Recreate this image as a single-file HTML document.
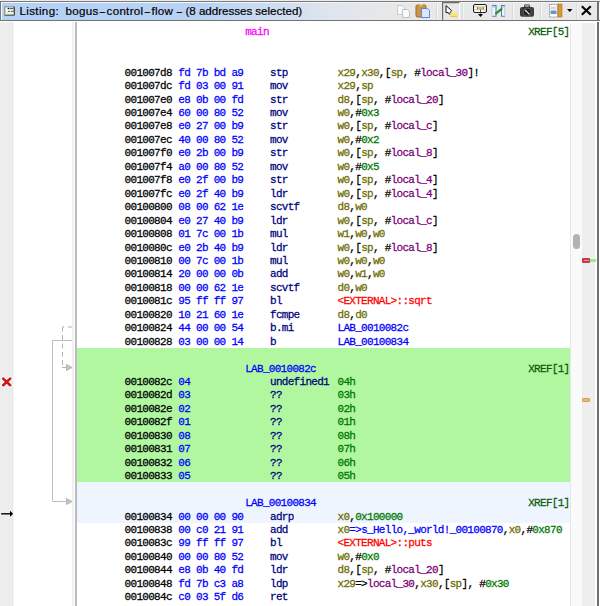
<!DOCTYPE html>
<html><head><meta charset="utf-8">
<style>
html,body{margin:0;padding:0;}
body{width:600px;height:606px;overflow:hidden;position:relative;background:#fff;}
.abs{position:absolute;}
.t{position:absolute;white-space:pre;font-family:"Liberation Mono",monospace;font-size:11px;letter-spacing:-0.7px;line-height:normal;-webkit-text-stroke:0.25px currentColor;transform:scaleY(1.07);transform-origin:0 9.2px;}
.dsh{display:inline-block;margin:0 0.6px;transform:scaleX(0.8)}
.tt{position:absolute;top:2.5px;font-family:'Liberation Sans';font-size:11.6px;line-height:16px;white-space:pre;color:#000;-webkit-text-stroke:0.2px #000}
#title{position:absolute;left:0;top:0;width:600px;height:22px;}
</style></head><body>
<!-- left gutter -->
<div class="abs" style="left:0;top:22px;width:12px;height:584px;background:#ededed"></div>
<div class="abs" style="left:12px;top:22px;width:1px;height:584px;background:#e7e7e7"></div>
<div class="abs" style="left:13px;top:22px;width:1px;height:584px;background:#f7f7f7"></div>
<!-- faint line and main bar -->
<div class="abs" style="left:72px;top:22px;width:2px;height:584px;background:#f0f0f0"></div>
<div class="abs" style="left:75px;top:22px;width:2px;height:584px;background:#bababa"></div>
<div class="abs" style="left:76px;top:348px;width:1px;height:134px;background:#c6b6d0"></div>
<!-- selection green -->
<div class="abs" style="left:77px;top:347.7px;width:493px;height:134.3px;background:#b0f7a0"></div>
<!-- cursor highlight -->
<div class="abs" style="left:77px;top:482px;width:493px;height:41px;background:#eef5fe"></div>
<!-- scrollbar -->
<div class="abs" style="left:570px;top:23px;width:12px;height:583px;background:#fafafa;border-left:1px solid #e6e6e6;box-sizing:border-box"></div>
<div class="abs" style="left:582px;top:23px;width:12.5px;height:583px;background:#eeeeee"></div>
<div class="abs" style="left:594.5px;top:23px;width:2.5px;height:583px;background:#fdfdfd"></div>
<div class="abs" style="left:597px;top:0;width:2px;height:606px;background:#6e6e6e"></div>
<div class="abs" style="left:573px;top:234px;width:7px;height:15px;background:#b2b2b2;border-radius:4px"></div>
<div class="abs" style="left:582px;top:258px;width:8px;height:5px;background:#c83848;border-radius:1px"></div>
<div class="abs" style="left:583.5px;top:260px;width:5px;height:1px;background:#e8a0a8"></div>
<div class="abs" style="left:590px;top:259px;width:6px;height:3px;background:#9be88f"></div>
<div class="abs" style="left:582px;top:398px;width:8px;height:4px;background:#c4c0b4;border:1px solid #e89a30;box-sizing:border-box;border-radius:1px"></div>
<!-- flow arrows -->
<svg class="abs" style="left:0;top:0" width="600" height="606" viewBox="0 0 600 606">
 <g fill="none" stroke="#b4b4b4" stroke-width="1">
  <path d="M72 340.5 H52.5 V501.5 H67" stroke="#bdbdbd"/>
  <path d="M68 327 H72 M62.5 327 H64.2 M62.5 326.5 V331.7 M62.5 335 V340.5 M62.5 343.5 V348.5 M62.5 352 V356.7 M62.5 360 V365 M62 367.5 H67"/>
 </g>
 <path d="M66.5 364.5 L72 367.5 L66.5 370.5 Z" fill="#c6c6c6" stroke="#a8a8a8" stroke-width="0.8" stroke-linejoin="round"/>
 <path d="M66.5 498.5 L72 501.5 L66.5 504.5 Z" fill="#c6c6c6" stroke="#a8a8a8" stroke-width="0.8" stroke-linejoin="round"/>
 <!-- red X -->
 <g stroke-linecap="round">
  <path d="M3.2 378.6 L10.2 385.2 M10.2 378.6 L3.2 385.2" stroke="#ffffff" stroke-width="4.6" opacity="0.7"/>
  <path d="M3.2 378.6 L10.2 385.2 M10.2 378.6 L3.2 385.2" stroke="#c81818" stroke-width="2.6"/>
 </g>
 <!-- black arrow -->
 <path d="M1.2 513.8 H10.5" stroke="#111" stroke-width="1.5"/>
 <path d="M10 510.8 L13.2 513.8 L10 516.8 Z" fill="#000"/>
</svg>
<!-- title bar -->
<div id="title">
 <div class="abs" style="left:0;top:0;width:600px;height:1px;background:#ececec"></div>
 <div class="abs" style="left:0;top:1px;width:600px;height:1px;background:#7a7a7a"></div>
 <div class="abs" style="left:0;top:3px;width:597px;height:17px;background:linear-gradient(to right,#b5d1f6 0px,#b9d2f3 200px,#dfe5ee 330px,#e8e8e8 400px,#e8e8e8 600px)"></div>
 <div class="abs" style="left:0;top:20px;width:600px;height:1px;background:#737373"></div>
 <div class="abs" style="left:0;top:21px;width:600px;height:1px;background:#fdfdfd"></div>
 <div class="abs" style="left:1px;top:2px;width:1px;height:18px;background:#f4f8ff"></div>
 <div class="abs" style="left:1px;top:2px;width:596px;height:1px;background:#f2f6fc"></div>
 <div class="abs" style="left:0;top:1px;width:1px;height:20px;background:#7a7a7a"></div>
 <div class="tt" style="left:19.5px;letter-spacing:0.35px">Listing:</div>
 <div class="tt" style="left:65.5px;letter-spacing:0.3px">bogus<span class="dsh">–</span>control<span class="dsh">–</span>flow</div>
 <div class="tt" style="left:175.2px"><span class="dsh">–</span></div>
 <div class="tt" style="left:185.5px;letter-spacing:-0.03px">(8 addresses selected)</div>

 <!-- toolbar -->
 <svg class="abs" style="left:0;top:0" width="600" height="22" viewBox="0 0 600 22">
  <!-- title icon -->
  <rect x="4" y="6.5" width="11" height="9.2" rx="1" fill="#4e4a3c"/>
  <rect x="4.2" y="7" width="2" height="8.2" fill="#b8a888"/>
  <rect x="5.5" y="7.3" width="8" height="7.5" fill="#fbfbf8"/>
  <path d="M6 7 H13" stroke="#c8dcc4" stroke-width="0.8"/>
  <circle cx="8.3" cy="8.6" r="0.75" fill="#000"/>
  <path d="M9.4 8.6 H13.3" stroke="#243488" stroke-width="0.9"/>
  <path d="M7.8 11.3 H10.1 M11 11.3 H13.2" stroke="#2e4a5a" stroke-width="1"/>
  <rect x="6" y="12.6" width="7.4" height="1.9" fill="#dcf2dc"/>
  <path d="M5.5 15 H13.5" stroke="#6a7a58" stroke-width="0.9"/>
  <!-- separators faint -->
  <path d="M436.5 3 V19 M462.5 3 V19 M512.5 3 V19 M540.5 3 V19 M576.5 3 V19" stroke="#dadada" stroke-width="1"/>
  <path d="M437.5 3 V19 M463.5 3 V19 M513.5 3 V19 M541.5 3 V19 M577.5 3 V19" stroke="#f6f6f6" stroke-width="1"/>
  <!-- copy disabled -->
  <path d="M397.5 5.5 H402.5 L404.5 7.5 V14.5 H397.5 Z" fill="#fafafa" stroke="#c8c8c8"/>
  <path d="M402.5 9.5 H407.5 L409.5 11.5 V17.5 H402.5 Z" fill="#fafafa" stroke="#c0c0c0"/>
  <!-- paste -->
  <rect x="416" y="5" width="10" height="12" rx="1.5" fill="#c8954a" stroke="#9a6a2a" stroke-width="1"/>
  <rect x="419" y="4" width="4" height="2" fill="#e8c070"/>
  <path d="M421.5 8.5 H427.5 L429.5 10.5 V17.5 H421.5 Z" fill="#dce8fa" stroke="#5a88d8"/>
  <!-- pressed button -->
  <path d="M442.6 20 V2.6 H459.5" stroke="#6e6e6e" stroke-width="1.2" fill="none"/><path d="M459.5 3.2 V19.5" stroke="#fafafa" stroke-width="1"/>
  <path d="M446 5.6 L451.6 10.6 L450.3 12.2 L450.2 14 L449.3 14.2 L448.3 12.6 L446 12.6 Z" fill="#fff" stroke="#111" stroke-width="1" stroke-linejoin="round"/>
  <rect x="450.2" y="13" width="7" height="3.8" fill="#fbe46a"/><path d="M450.2 16.5 H457.2" stroke="#f0b840" stroke-width="0.8"/>
  <!-- table icon -->
  <rect x="473.5" y="4.5" width="13" height="8" rx="1.5" fill="#fff" stroke="#1a1a1a" stroke-width="1"/>
  <path d="M474 6.8 H486 M474 9.8 H486" stroke="#b8b8b8" stroke-width="0.9"/>
  <rect x="478" y="7.2" width="5" height="2.2" fill="#f2b532"/>
  <path d="M477.5 7.2 V9.4 M483.5 7.2 V9.4" stroke="#3a4a7a" stroke-width="0.7"/>
  <path d="M480.5 9.5 V13.5" stroke="#1a2a60" stroke-width="0.8"/>
  <path d="M478 14 H483 L480.5 17 Z" fill="#000"/>
  <!-- checkmark icon -->
  <rect x="491.8" y="5.5" width="4.4" height="11" fill="#f4f8fe"/>
  <rect x="501.2" y="5.5" width="3.6" height="11" fill="#f4f8fe"/>
  <path d="M492 5.6 H496 V16.3 H492" fill="none" stroke="#4f7fd0" stroke-width="1.1"/>
  <path d="M492 6 V16" stroke="#a8c0e8" stroke-width="0.8"/>
  <path d="M505 5.6 H501.5 V16.3 H505" fill="none" stroke="#4f7fd0" stroke-width="1.1"/>
  <path d="M504.8 6 V16" stroke="#a8c0e8" stroke-width="0.8"/>
  <path d="M492.5 7.2 H495.5 M502 7.2 H504.5" stroke="#a8d890" stroke-width="1"/>
  <path d="M496 13.3 L501.5 9.2" fill="none" stroke="#2e8e22" stroke-width="2.2" stroke-linecap="round"/>
  <!-- camera -->
  <rect x="520" y="7" width="14" height="9.8" rx="2" fill="#3c3c3c"/>
  <path d="M523.8 7.5 L524.6 4.6 H529.4 L530.2 7.5 Z" fill="#2c2c2c"/>
  <rect x="525.2" y="5.3" width="3.6" height="1.3" fill="#d8d8d8"/>
  <circle cx="527.3" cy="12.2" r="4" fill="#202020" stroke="#707070" stroke-width="0.7"/>
  <path d="M525 10 L529.5 14.4" stroke="#e8e8e8" stroke-width="1.2"/>
  <!-- page icon -->
  <rect x="549.5" y="4.5" width="8" height="12.5" fill="#fff" stroke="#707070" stroke-width="0.8" stroke-dasharray="1 0.6"/>
  <rect x="550.5" y="6.5" width="6" height="3" fill="#d8d8d8"/>
  <rect x="550.5" y="10.5" width="6" height="3.5" fill="#6a94c8"/>
  <rect x="558" y="4" width="4" height="13" fill="#d89a30" stroke="#b07020" stroke-width="0.6"/>
  <!-- dropdown -->
  <path d="M567 9 H572.5 L569.75 12 Z" fill="#000"/>
  <!-- close X -->
  <path d="M581.8 6.3 L590.8 14.8 M590.8 6.3 L581.8 14.8" stroke="#000" stroke-width="2.1"/>
 </svg>
</div>
<div class="t" style="top:26.34px;left:245.20px"><span style="color:#ff00ff">main</span></div>
<div class="t" style="top:26.34px;right:30.50px"><span style="color:#0c5c0c">XREF[5]</span></div>
<div class="t" style="top:66.69px;left:124.60px"><span style="color:#000">001007d8</span></div>
<div class="t" style="top:66.69px;left:178.30px"><span style="color:#0000ff">fd 7b bd a9</span></div>
<div class="t" style="top:66.69px;left:270.00px"><span style="color:#000080">stp</span></div>
<div class="t" style="top:66.69px;left:337.50px"><span style="color:#6c6c00">x29</span><span style="color:#000">,</span><span style="color:#6c6c00">x30</span><span style="color:#000">,</span><span style="color:#000">[</span><span style="color:#6c6c00">sp</span><span style="color:#000">,</span><span style="color:#000"> </span><span style="color:#000">#</span><span style="color:#7a007a">local_30</span><span style="color:#000">]</span><span style="color:#000">!</span></div>
<div class="t" style="top:80.14px;left:124.60px"><span style="color:#000">001007dc</span></div>
<div class="t" style="top:80.14px;left:178.30px"><span style="color:#0000ff">fd 03 00 91</span></div>
<div class="t" style="top:80.14px;left:270.00px"><span style="color:#000080">mov</span></div>
<div class="t" style="top:80.14px;left:337.50px"><span style="color:#6c6c00">x29</span><span style="color:#000">,</span><span style="color:#6c6c00">sp</span></div>
<div class="t" style="top:93.59px;left:124.60px"><span style="color:#000">001007e0</span></div>
<div class="t" style="top:93.59px;left:178.30px"><span style="color:#0000ff">e8 0b 00 fd</span></div>
<div class="t" style="top:93.59px;left:270.00px"><span style="color:#000080">str</span></div>
<div class="t" style="top:93.59px;left:337.50px"><span style="color:#6c6c00">d8</span><span style="color:#000">,</span><span style="color:#000">[</span><span style="color:#6c6c00">sp</span><span style="color:#000">,</span><span style="color:#000"> </span><span style="color:#000">#</span><span style="color:#7a007a">local_20</span><span style="color:#000">]</span></div>
<div class="t" style="top:107.04px;left:124.60px"><span style="color:#000">001007e4</span></div>
<div class="t" style="top:107.04px;left:178.30px"><span style="color:#0000ff">60 00 80 52</span></div>
<div class="t" style="top:107.04px;left:270.00px"><span style="color:#000080">mov</span></div>
<div class="t" style="top:107.04px;left:337.50px"><span style="color:#6c6c00">w0</span><span style="color:#000">,</span><span style="color:#000">#</span><span style="color:#007800">0x3</span></div>
<div class="t" style="top:120.49px;left:124.60px"><span style="color:#000">001007e8</span></div>
<div class="t" style="top:120.49px;left:178.30px"><span style="color:#0000ff">e0 27 00 b9</span></div>
<div class="t" style="top:120.49px;left:270.00px"><span style="color:#000080">str</span></div>
<div class="t" style="top:120.49px;left:337.50px"><span style="color:#6c6c00">w0</span><span style="color:#000">,</span><span style="color:#000">[</span><span style="color:#6c6c00">sp</span><span style="color:#000">,</span><span style="color:#000"> </span><span style="color:#000">#</span><span style="color:#7a007a">local_c</span><span style="color:#000">]</span></div>
<div class="t" style="top:133.94px;left:124.60px"><span style="color:#000">001007ec</span></div>
<div class="t" style="top:133.94px;left:178.30px"><span style="color:#0000ff">40 00 80 52</span></div>
<div class="t" style="top:133.94px;left:270.00px"><span style="color:#000080">mov</span></div>
<div class="t" style="top:133.94px;left:337.50px"><span style="color:#6c6c00">w0</span><span style="color:#000">,</span><span style="color:#000">#</span><span style="color:#007800">0x2</span></div>
<div class="t" style="top:147.39px;left:124.60px"><span style="color:#000">001007f0</span></div>
<div class="t" style="top:147.39px;left:178.30px"><span style="color:#0000ff">e0 2b 00 b9</span></div>
<div class="t" style="top:147.39px;left:270.00px"><span style="color:#000080">str</span></div>
<div class="t" style="top:147.39px;left:337.50px"><span style="color:#6c6c00">w0</span><span style="color:#000">,</span><span style="color:#000">[</span><span style="color:#6c6c00">sp</span><span style="color:#000">,</span><span style="color:#000"> </span><span style="color:#000">#</span><span style="color:#7a007a">local_8</span><span style="color:#000">]</span></div>
<div class="t" style="top:160.84px;left:124.60px"><span style="color:#000">001007f4</span></div>
<div class="t" style="top:160.84px;left:178.30px"><span style="color:#0000ff">a0 00 80 52</span></div>
<div class="t" style="top:160.84px;left:270.00px"><span style="color:#000080">mov</span></div>
<div class="t" style="top:160.84px;left:337.50px"><span style="color:#6c6c00">w0</span><span style="color:#000">,</span><span style="color:#000">#</span><span style="color:#007800">0x5</span></div>
<div class="t" style="top:174.29px;left:124.60px"><span style="color:#000">001007f8</span></div>
<div class="t" style="top:174.29px;left:178.30px"><span style="color:#0000ff">e0 2f 00 b9</span></div>
<div class="t" style="top:174.29px;left:270.00px"><span style="color:#000080">str</span></div>
<div class="t" style="top:174.29px;left:337.50px"><span style="color:#6c6c00">w0</span><span style="color:#000">,</span><span style="color:#000">[</span><span style="color:#6c6c00">sp</span><span style="color:#000">,</span><span style="color:#000"> </span><span style="color:#000">#</span><span style="color:#7a007a">local_4</span><span style="color:#000">]</span></div>
<div class="t" style="top:187.74px;left:124.60px"><span style="color:#000">001007fc</span></div>
<div class="t" style="top:187.74px;left:178.30px"><span style="color:#0000ff">e0 2f 40 b9</span></div>
<div class="t" style="top:187.74px;left:270.00px"><span style="color:#000080">ldr</span></div>
<div class="t" style="top:187.74px;left:337.50px"><span style="color:#6c6c00">w0</span><span style="color:#000">,</span><span style="color:#000">[</span><span style="color:#6c6c00">sp</span><span style="color:#000">,</span><span style="color:#000"> </span><span style="color:#000">#</span><span style="color:#7a007a">local_4</span><span style="color:#000">]</span></div>
<div class="t" style="top:201.19px;left:124.60px"><span style="color:#000">00100800</span></div>
<div class="t" style="top:201.19px;left:178.30px"><span style="color:#0000ff">08 00 62 1e</span></div>
<div class="t" style="top:201.19px;left:270.00px"><span style="color:#000080">scvtf</span></div>
<div class="t" style="top:201.19px;left:337.50px"><span style="color:#6c6c00">d8</span><span style="color:#000">,</span><span style="color:#6c6c00">w0</span></div>
<div class="t" style="top:214.64px;left:124.60px"><span style="color:#000">00100804</span></div>
<div class="t" style="top:214.64px;left:178.30px"><span style="color:#0000ff">e0 27 40 b9</span></div>
<div class="t" style="top:214.64px;left:270.00px"><span style="color:#000080">ldr</span></div>
<div class="t" style="top:214.64px;left:337.50px"><span style="color:#6c6c00">w0</span><span style="color:#000">,</span><span style="color:#000">[</span><span style="color:#6c6c00">sp</span><span style="color:#000">,</span><span style="color:#000"> </span><span style="color:#000">#</span><span style="color:#7a007a">local_c</span><span style="color:#000">]</span></div>
<div class="t" style="top:228.09px;left:124.60px"><span style="color:#000">00100808</span></div>
<div class="t" style="top:228.09px;left:178.30px"><span style="color:#0000ff">01 7c 00 1b</span></div>
<div class="t" style="top:228.09px;left:270.00px"><span style="color:#000080">mul</span></div>
<div class="t" style="top:228.09px;left:337.50px"><span style="color:#6c6c00">w1</span><span style="color:#000">,</span><span style="color:#6c6c00">w0</span><span style="color:#000">,</span><span style="color:#6c6c00">w0</span></div>
<div class="t" style="top:241.54px;left:124.60px"><span style="color:#000">0010080c</span></div>
<div class="t" style="top:241.54px;left:178.30px"><span style="color:#0000ff">e0 2b 40 b9</span></div>
<div class="t" style="top:241.54px;left:270.00px"><span style="color:#000080">ldr</span></div>
<div class="t" style="top:241.54px;left:337.50px"><span style="color:#6c6c00">w0</span><span style="color:#000">,</span><span style="color:#000">[</span><span style="color:#6c6c00">sp</span><span style="color:#000">,</span><span style="color:#000"> </span><span style="color:#000">#</span><span style="color:#7a007a">local_8</span><span style="color:#000">]</span></div>
<div class="t" style="top:254.99px;left:124.60px"><span style="color:#000">00100810</span></div>
<div class="t" style="top:254.99px;left:178.30px"><span style="color:#0000ff">00 7c 00 1b</span></div>
<div class="t" style="top:254.99px;left:270.00px"><span style="color:#000080">mul</span></div>
<div class="t" style="top:254.99px;left:337.50px"><span style="color:#6c6c00">w0</span><span style="color:#000">,</span><span style="color:#6c6c00">w0</span><span style="color:#000">,</span><span style="color:#6c6c00">w0</span></div>
<div class="t" style="top:268.44px;left:124.60px"><span style="color:#000">00100814</span></div>
<div class="t" style="top:268.44px;left:178.30px"><span style="color:#0000ff">20 00 00 0b</span></div>
<div class="t" style="top:268.44px;left:270.00px"><span style="color:#000080">add</span></div>
<div class="t" style="top:268.44px;left:337.50px"><span style="color:#6c6c00">w0</span><span style="color:#000">,</span><span style="color:#6c6c00">w1</span><span style="color:#000">,</span><span style="color:#6c6c00">w0</span></div>
<div class="t" style="top:281.89px;left:124.60px"><span style="color:#000">00100818</span></div>
<div class="t" style="top:281.89px;left:178.30px"><span style="color:#0000ff">00 00 62 1e</span></div>
<div class="t" style="top:281.89px;left:270.00px"><span style="color:#000080">scvtf</span></div>
<div class="t" style="top:281.89px;left:337.50px"><span style="color:#6c6c00">d0</span><span style="color:#000">,</span><span style="color:#6c6c00">w0</span></div>
<div class="t" style="top:295.34px;left:124.60px"><span style="color:#000">0010081c</span></div>
<div class="t" style="top:295.34px;left:178.30px"><span style="color:#0000ff">95 ff ff 97</span></div>
<div class="t" style="top:295.34px;left:270.00px"><span style="color:#000080">bl</span></div>
<div class="t" style="top:295.34px;left:337.50px"><span style="color:#ff0000">&lt;EXTERNAL&gt;::sqrt</span></div>
<div class="t" style="top:308.79px;left:124.60px"><span style="color:#000">00100820</span></div>
<div class="t" style="top:308.79px;left:178.30px"><span style="color:#0000ff">10 21 60 1e</span></div>
<div class="t" style="top:308.79px;left:270.00px"><span style="color:#000080">fcmpe</span></div>
<div class="t" style="top:308.79px;left:337.50px"><span style="color:#6c6c00">d8</span><span style="color:#000">,</span><span style="color:#6c6c00">d0</span></div>
<div class="t" style="top:322.24px;left:124.60px"><span style="color:#000">00100824</span></div>
<div class="t" style="top:322.24px;left:178.30px"><span style="color:#0000ff">44 00 00 54</span></div>
<div class="t" style="top:322.24px;left:270.00px"><span style="color:#000080">b.mi</span></div>
<div class="t" style="top:322.24px;left:337.50px"><span style="color:#0000ff">LAB_0010082c</span></div>
<div class="t" style="top:335.69px;left:124.60px"><span style="color:#000">00100828</span></div>
<div class="t" style="top:335.69px;left:178.30px"><span style="color:#0000ff">03 00 00 14</span></div>
<div class="t" style="top:335.69px;left:270.00px"><span style="color:#000080">b</span></div>
<div class="t" style="top:335.69px;left:337.50px"><span style="color:#0000ff">LAB_00100834</span></div>
<div class="t" style="top:362.59px;left:245.20px"><span style="color:#0000ff">LAB_0010082c</span></div>
<div class="t" style="top:362.59px;right:30.50px"><span style="color:#0c5c0c">XREF[1]</span></div>
<div class="t" style="top:376.04px;left:124.60px"><span style="color:#000">0010082c</span></div>
<div class="t" style="top:376.04px;left:178.30px"><span style="color:#0000ff">04</span></div>
<div class="t" style="top:376.04px;left:270.00px"><span style="color:#000080">undefined1</span></div>
<div class="t" style="top:376.04px;left:337.50px"><span style="color:#007800">04h</span></div>
<div class="t" style="top:389.49px;left:124.60px"><span style="color:#000">0010082d</span></div>
<div class="t" style="top:389.49px;left:178.30px"><span style="color:#0000ff">03</span></div>
<div class="t" style="top:389.49px;left:270.00px"><span style="color:#000080">??</span></div>
<div class="t" style="top:389.49px;left:337.50px"><span style="color:#007800">03h</span></div>
<div class="t" style="top:402.94px;left:124.60px"><span style="color:#000">0010082e</span></div>
<div class="t" style="top:402.94px;left:178.30px"><span style="color:#0000ff">02</span></div>
<div class="t" style="top:402.94px;left:270.00px"><span style="color:#000080">??</span></div>
<div class="t" style="top:402.94px;left:337.50px"><span style="color:#007800">02h</span></div>
<div class="t" style="top:416.39px;left:124.60px"><span style="color:#000">0010082f</span></div>
<div class="t" style="top:416.39px;left:178.30px"><span style="color:#0000ff">01</span></div>
<div class="t" style="top:416.39px;left:270.00px"><span style="color:#000080">??</span></div>
<div class="t" style="top:416.39px;left:337.50px"><span style="color:#007800">01h</span></div>
<div class="t" style="top:429.84px;left:124.60px"><span style="color:#000">00100830</span></div>
<div class="t" style="top:429.84px;left:178.30px"><span style="color:#0000ff">08</span></div>
<div class="t" style="top:429.84px;left:270.00px"><span style="color:#000080">??</span></div>
<div class="t" style="top:429.84px;left:337.50px"><span style="color:#007800">08h</span></div>
<div class="t" style="top:443.29px;left:124.60px"><span style="color:#000">00100831</span></div>
<div class="t" style="top:443.29px;left:178.30px"><span style="color:#0000ff">07</span></div>
<div class="t" style="top:443.29px;left:270.00px"><span style="color:#000080">??</span></div>
<div class="t" style="top:443.29px;left:337.50px"><span style="color:#007800">07h</span></div>
<div class="t" style="top:456.74px;left:124.60px"><span style="color:#000">00100832</span></div>
<div class="t" style="top:456.74px;left:178.30px"><span style="color:#0000ff">06</span></div>
<div class="t" style="top:456.74px;left:270.00px"><span style="color:#000080">??</span></div>
<div class="t" style="top:456.74px;left:337.50px"><span style="color:#007800">06h</span></div>
<div class="t" style="top:470.19px;left:124.60px"><span style="color:#000">00100833</span></div>
<div class="t" style="top:470.19px;left:178.30px"><span style="color:#0000ff">05</span></div>
<div class="t" style="top:470.19px;left:270.00px"><span style="color:#000080">??</span></div>
<div class="t" style="top:470.19px;left:337.50px"><span style="color:#007800">05h</span></div>
<div class="t" style="top:497.09px;left:245.20px"><span style="color:#0000ff">LAB_00100834</span></div>
<div class="t" style="top:497.09px;right:30.50px"><span style="color:#0c5c0c">XREF[1]</span></div>
<div class="t" style="top:510.54px;left:124.60px"><span style="color:#000">00100834</span></div>
<div class="t" style="top:510.54px;left:178.30px"><span style="color:#0000ff">00 00 00 90</span></div>
<div class="t" style="top:510.54px;left:270.00px"><span style="color:#000080">adrp</span></div>
<div class="t" style="top:510.54px;left:337.50px"><span style="color:#6c6c00">x0</span><span style="color:#000">,</span><span style="color:#007800">0x100000</span></div>
<div class="t" style="top:523.99px;left:124.60px"><span style="color:#000">00100838</span></div>
<div class="t" style="top:523.99px;left:178.30px"><span style="color:#0000ff">00 c0 21 91</span></div>
<div class="t" style="top:523.99px;left:270.00px"><span style="color:#000080">add</span></div>
<div class="t" style="top:523.99px;left:337.50px"><span style="color:#6c6c00">x0</span><span style="color:#0000ff">=&gt;</span><span style="color:#0000ff">s_Hello,_world!_00100870</span><span style="color:#000">,</span><span style="color:#6c6c00">x0</span><span style="color:#000">,</span><span style="color:#000">#</span><span style="color:#007800">0x870</span></div>
<div class="t" style="top:537.44px;left:124.60px"><span style="color:#000">0010083c</span></div>
<div class="t" style="top:537.44px;left:178.30px"><span style="color:#0000ff">99 ff ff 97</span></div>
<div class="t" style="top:537.44px;left:270.00px"><span style="color:#000080">bl</span></div>
<div class="t" style="top:537.44px;left:337.50px"><span style="color:#ff0000">&lt;EXTERNAL&gt;::puts</span></div>
<div class="t" style="top:550.89px;left:124.60px"><span style="color:#000">00100840</span></div>
<div class="t" style="top:550.89px;left:178.30px"><span style="color:#0000ff">00 00 80 52</span></div>
<div class="t" style="top:550.89px;left:270.00px"><span style="color:#000080">mov</span></div>
<div class="t" style="top:550.89px;left:337.50px"><span style="color:#6c6c00">w0</span><span style="color:#000">,</span><span style="color:#000">#</span><span style="color:#007800">0x0</span></div>
<div class="t" style="top:564.34px;left:124.60px"><span style="color:#000">00100844</span></div>
<div class="t" style="top:564.34px;left:178.30px"><span style="color:#0000ff">e8 0b 40 fd</span></div>
<div class="t" style="top:564.34px;left:270.00px"><span style="color:#000080">ldr</span></div>
<div class="t" style="top:564.34px;left:337.50px"><span style="color:#6c6c00">d8</span><span style="color:#000">,</span><span style="color:#000">[</span><span style="color:#6c6c00">sp</span><span style="color:#000">,</span><span style="color:#000"> </span><span style="color:#000">#</span><span style="color:#7a007a">local_20</span><span style="color:#000">]</span></div>
<div class="t" style="top:577.79px;left:124.60px"><span style="color:#000">00100848</span></div>
<div class="t" style="top:577.79px;left:178.30px"><span style="color:#0000ff">fd 7b c3 a8</span></div>
<div class="t" style="top:577.79px;left:270.00px"><span style="color:#000080">ldp</span></div>
<div class="t" style="top:577.79px;left:337.50px"><span style="color:#6c6c00">x29</span><span style="color:#000">=&gt;</span><span style="color:#7a007a">local_30</span><span style="color:#000">,</span><span style="color:#6c6c00">x30</span><span style="color:#000">,</span><span style="color:#000">[</span><span style="color:#6c6c00">sp</span><span style="color:#000">]</span><span style="color:#000">,</span><span style="color:#000"> </span><span style="color:#000">#</span><span style="color:#007800">0x30</span></div>
<div class="t" style="top:591.24px;left:124.60px"><span style="color:#000">0010084c</span></div>
<div class="t" style="top:591.24px;left:178.30px"><span style="color:#0000ff">c0 03 5f d6</span></div>
<div class="t" style="top:591.24px;left:270.00px"><span style="color:#000080">ret</span></div>
</body></html>
